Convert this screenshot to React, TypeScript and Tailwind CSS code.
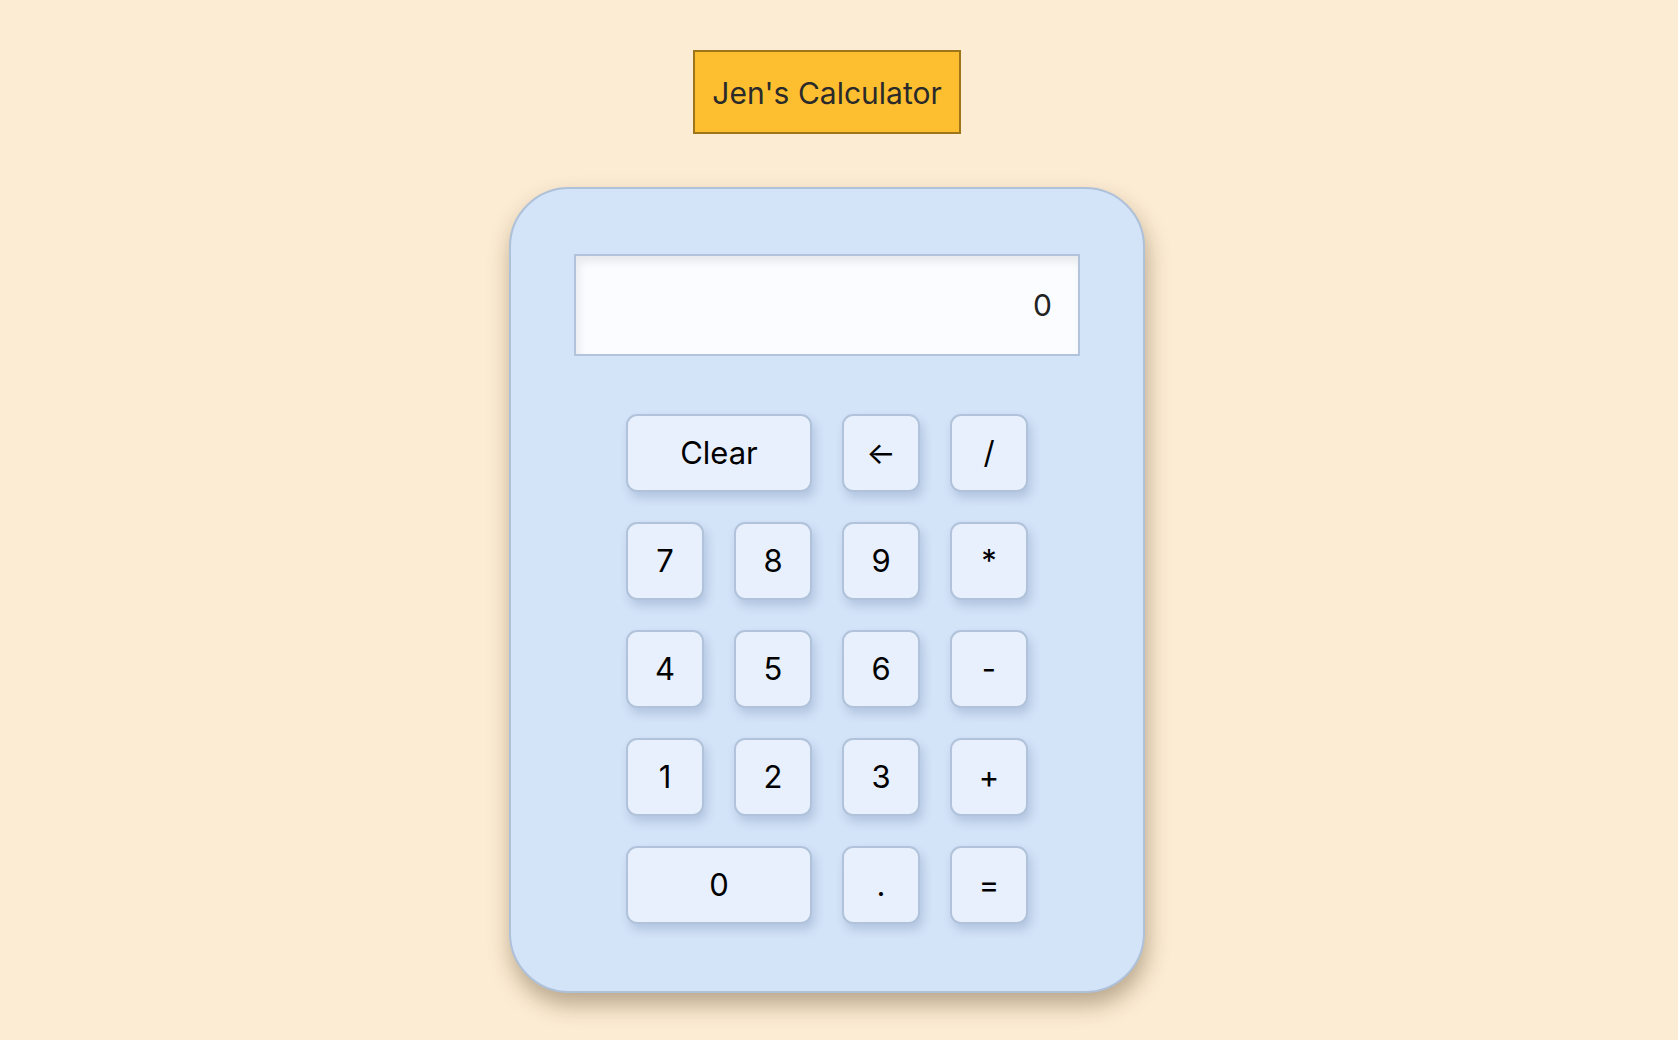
const rows: { label: string; wide?: boolean }[][] = [
  [{ label: 'Clear', wide: true }, { label: '←' }, { label: '/' }],
  [{ label: '7' }, { label: '8' }, { label: '9' }, { label: '*' }],
  [{ label: '4' }, { label: '5' }, { label: '6' }, { label: '-' }],
  [{ label: '1' }, { label: '2' }, { label: '3' }, { label: '+' }],
  [{ label: '0', wide: true }, { label: '.' }, { label: '=' }],
];

function Key({ label, wide }: { label: string; wide?: boolean }) {
  return (
    <button
      className={`${wide ? 'col-span-2' : ''} flex h-[78px] items-center justify-center rounded-[11px] border-2 border-[#b1c3da] bg-[#e8f0fd] text-[31px] text-black shadow-[3px_6px_10px_rgba(80,105,150,0.24)]`}
    >
      {label}
    </button>
  );
}

export default function App() {
  return (
    <div className="min-h-[1040px] w-full bg-[#fcecd3] pr-[24px] font-['Inter',sans-serif]">
      <div className="flex flex-col items-center pt-[50px]">
        <h1 className="border-2 border-[#9e7619] bg-[#fdbf30] px-[17px] pt-[22px] pb-[20px] text-[30px] leading-[38px] font-normal text-[#2a2a2a]">
          Jen's Calculator
        </h1>

        <div className="mt-[53px] w-[636px] rounded-[60px] border-2 border-[#aec1d9] bg-[#d3e3f8] px-[63px] pt-[65px] pb-[67px] shadow-[2px_12px_22px_rgba(60,40,10,0.35)]">
          <div className="flex h-[102px] items-center justify-end border-2 border-[#b1c4dc] bg-[#fbfcff] pr-[26px] text-[30px] text-[#222] shadow-[inset_3px_6px_8px_rgba(0,0,0,0.08)]">
            0
          </div>

          <div className="mx-auto mt-[58px] grid w-[402px] grid-cols-4 gap-[30px]">
            {rows.flat().map((k, i) => (
              <Key key={i} label={k.label} wide={k.wide} />
            ))}
          </div>
        </div>
      </div>
    </div>
  );
}
